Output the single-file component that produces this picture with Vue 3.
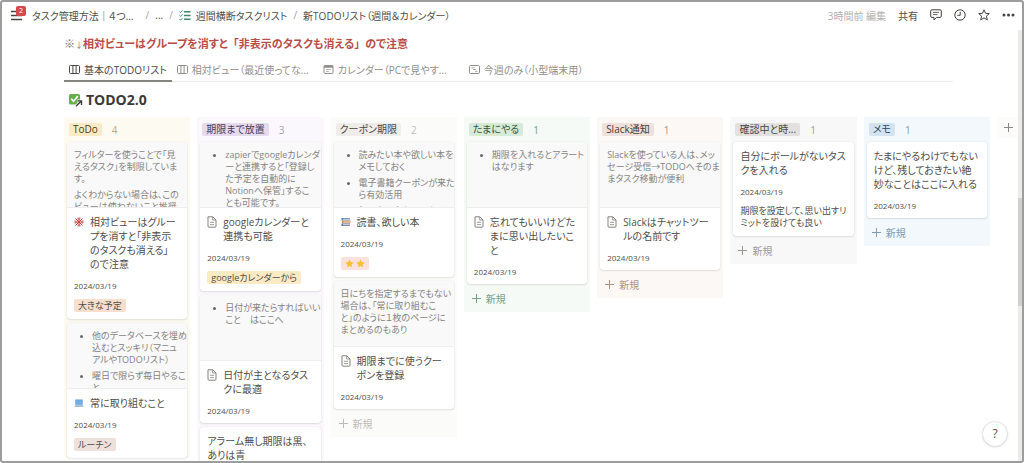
<script setup>
const tabs = [
  { label: '基本のTODOリスト', icon: 'board', active: true },
  { label: '相対ビュー（最近使ってな...', icon: 'board', wide: true },
  { label: 'カレンダー（PCで見やす...', icon: 'calendar', wide: true },
  { label: '今週のみ（小型端末用）', icon: 'timeline' },
]

const columns = [
  {
    name: 'ToDo', count: 4, tone: 'yellow',
    cards: [
      {
        cover: [
          { lines: ['フィルターを使うことで「見', 'えるタスク」を制限していま', 'す。'] },
          { lines: ['よくわからない場合は、この', 'ビューは使わないこと推奨'] },
        ],
        icon: 'ornament',
        title: ['相対ビューはグルー', 'プを消すと「非表示', 'のタスクも消える」', 'ので注意'],
        date: '2024/03/19',
        tag: { text: '大きな予定', tone: 'orange' },
      },
      {
        cover: [
          { bullet: true, lines: ['他のデータベースを埋め', '込むとスッキリ（マニュ', 'アルやTODOリスト）'] },
          { bullet: true, lines: ['曜日で限らず毎日やるこ', 'と'] },
        ],
        icon: 'laptop',
        title: ['常に取り組むこと'],
        date: '2024/03/19',
        tag: { text: 'ルーチン', tone: 'brown' },
      },
    ],
  },
  {
    name: '期限まで放置', count: 3, tone: 'purple',
    cards: [
      {
        cover: [{ bullet: true, lines: ['zapierでgoogleカレンダ', 'ーと連携すると「登録し', 'た予定を自動的に', 'Notionへ保管」するこ', 'とも可能です。'] }],
        icon: 'page',
        title: ['googleカレンダーと', '連携も可能'],
        date: '2024/03/19',
        tag: { text: 'googleカレンダーから', tone: 'gold' },
      },
      {
        cover: [{ bullet: true, lines: ['日付が来たらすればいい', 'こと　はここへ'] }],
        icon: 'page',
        title: ['日付が主となるタス', 'クに最適'],
        date: '2024/03/19',
      },
      { title: ['アラーム無し期限は黒、', 'ありは青'] },
    ],
  },
  {
    name: 'クーポン期限', count: 2, tone: 'sand', create: true,
    cards: [
      {
        cover: [
          { bullet: true, lines: ['読みたい本や欲しい本を', 'メモしておく'] },
          { bullet: true, lines: ['電子書籍クーポンが来た', 'ら有効活用'] },
          { bullet: true, lines: ['気になる本もメモする'] },
        ],
        icon: 'books',
        title: ['読書、欲しい本'],
        date: '2024/03/19',
        tag: { stars: 2, tone: 'red' },
      },
      {
        cover: [{ lines: ['日にちを指定するまでもない', '場合は、「常に取り組むこ', 'と」のように１枚のページに', 'まとめるのもあり'] }],
        icon: 'page',
        title: ['期限までに使うクー', 'ポンを登録'],
        date: '2024/03/19',
      },
    ],
  },
  {
    name: 'たまにやる', count: 1, tone: 'green', create: true,
    cards: [
      {
        cover: [{ bullet: true, lines: ['期限を入れるとアラート', 'はなります'] }],
        icon: 'page',
        title: ['忘れてもいいけどた', 'まに思い出したいこ', 'と'],
        date: '2024/03/19',
      },
    ],
  },
  {
    name: 'Slack通知', count: 1, tone: 'clay', create: true,
    cards: [
      {
        cover: [{ lines: ['Slackを使っている人は、メッ', 'セージ受信→TODOへそのま', 'まタスク移動が便利'] }],
        icon: 'page',
        title: ['Slackはチャットツー', 'ルの名前です'],
        date: '2024/03/19',
      },
    ],
  },
  {
    name: '確認中と時...', count: 1, tone: 'gray', create: true,
    cards: [
      {
        title: ['自分にボールがないタス', 'クを入れる'],
        date: '2024/03/19',
        note: ['期限を設定して、思い出すリ', 'ミットを設けても良い'],
      },
    ],
  },
  {
    name: 'メモ', count: 1, tone: 'blue', create: true,
    cards: [
      {
        title: ['たまにやるわけでもない', 'けど、残しておきたい絶', '妙なことはここに入れる'],
        date: '2024/03/19',
      },
    ],
  },
]
</script>

<template>
  <div class="window">
    <header class="topbar">
      <button class="menu" aria-label="メニュー">
        <svg width="13" height="11" viewBox="0 0 13 11"><path d="M0 1.5h11M0 5.5h11M0 9.5h11" stroke="#4a4845" stroke-width="1.3" /></svg>
        <span class="badge">2</span>
      </button>
      <nav class="crumbs">
        <a href="#">タスク管理方法｜４つ...</a>
        <span class="slash first">/</span>
        <a href="#">...</a>
        <span class="slash">/</span>
        <a href="#" class="with-icon">
          <svg width="12" height="11" viewBox="0 0 12 11" fill="none" stroke="#3c8b66"><path d="M.5 1.6l1 1L3.4.6M.5 5.4l1 1 1.900-2M.5 9.200l1 1 1.900-2" /><path d="M5 1.700h6.500M5 5.500h6.500M5 9.300h6.500" stroke-width="1.500" /></svg>
          週間横断タスクリスト
        </a>
        <span class="slash">/</span>
        <a href="#">新TODOリスト（週間＆カレンダー）</a>
      </nav>
      <div class="actions">
        <span class="edited">3時間前 編集</span>
        <button class="share">共有</button>
        <button aria-label="コメント">
          <svg width="12" height="12" viewBox="0 0 12 12" fill="none" stroke="#45423f" stroke-linejoin="round"><path d="M2 .8h8q1.300 0 1.300 1.300v5q0 1.300-1.300 1.300H6.500L4 11V8.400H2Q.7 8.400.7 7.100v-5Q.7.8 2 .8z" /><path d="M3 3.400h6M3 5.600h4.500" stroke-width=".8" /></svg>
        </button>
        <button aria-label="更新履歴">
          <svg width="12" height="12" viewBox="0 0 12 12" fill="none" stroke="#45423f"><circle cx="6" cy="6" r="5.200" /><path d="M6.200 2.800v3.500H3.400" /></svg>
        </button>
        <button aria-label="お気に入り">
          <svg width="12" height="12" viewBox="0 0 12 12" fill="none" stroke="#45423f" stroke-linejoin="round"><path d="M6 .8l1.500 3.500 3.800.3-2.900 2.500.9 3.800L6 8.900l-3.300 2 .9-3.800L.7 4.600l3.800-.3z" /></svg>
        </button>
        <button aria-label="その他">
          <svg width="13" height="12" viewBox="0 0 13 12" fill="#45423f"><circle cx="2" cy="6" r="1.500" /><circle cx="6.500" cy="6" r="1.500" /><circle cx="11" cy="6" r="1.500" /></svg>
        </button>
      </div>
    </header>

    <main class="page">
      <div class="content">
        <p class="notice"><span class="mark">※<small>↓</small></span><span>相対ビューはグループを消すと<span class="full">「</span>非表示のタスクも消える<span class="full">」</span>ので注意</span></p>

        <div class="tabs" role="tablist">
          <button v-for="tab in tabs" :key="tab.label" role="tab" :aria-selected="!!tab.active" class="tab" :class="{ active: tab.active, wide: tab.wide }">
            <svg v-if="tab.icon === 'board'" width="11" height="9" viewBox="0 0 11 9" fill="none" stroke="currentColor"><rect x=".5" y=".5" width="10" height="8" rx="1" /><path d="M3.900.5v8M7.100.5v8" /></svg>
            <svg v-else-if="tab.icon === 'calendar'" width="11" height="9" viewBox="0 0 11 9" fill="none" stroke="currentColor"><rect x="1" y=".5" width="9" height="8" rx="1" /><path d="M1 1.700h9" stroke-width="2" /><path d="M3 4.500h5M3 6.500h3" stroke-width=".6" /></svg>
            <svg v-else width="11" height="9" viewBox="0 0 11 9" fill="none" stroke="currentColor"><rect x=".5" y=".5" width="10" height="8" rx="1" /><path d="M2.500 2.800h3M4 4.500h3M6 6.300h2.500" stroke-width=".8" /></svg>
            <span>{{ tab.label }}</span>
          </button>
        </div>

        <h1 class="db-title">
          <svg width="14" height="14" viewBox="0 0 14 14" fill="none"><rect x="0" y="1" width="11" height="10.500" rx="1.500" fill="#66b04b" /><path d="M2.300 5.800l2.300 2.500L8.800 3" stroke="#fff" stroke-width="1.600" /><path d="M6.700 13.500l5-5M8.300 7.800h4v4" stroke="#fff" stroke-width="2.800" /><path d="M7 13.300l5-5M8.500 7.900h4v4" stroke="#3c3a37" stroke-width="1.400" /></svg>
          TODO2.0
        </h1>
      </div>

      <div class="board-row">
        <div class="board">
          <section v-for="col in columns" :key="col.name" class="column" :class="col.tone">
            <div class="col-head">
              <h2 class="chip">{{ col.name }}</h2>
              <span class="count">{{ col.count }}</span>
            </div>
            <div class="cards">
              <article v-for="(card, i) in col.cards" :key="i" class="card">
                <div v-if="card.cover" class="cover">
                  <p v-for="(para, p) in card.cover" :key="p" :class="{ bullet: para.bullet }">
                    <template v-for="(line, l) in para.lines" :key="l"><br v-if="l" />{{ line }}</template>
                  </p>
                </div>
                <div class="body">
                  <div class="title-row">
                    <span v-if="card.icon" class="icon">
                      <svg v-if="card.icon === 'page'" width="10" height="12" viewBox="0 0 10 12" fill="none" stroke="#83817d"><path d="M1 .8h4.800L9 4v6.200q0 1-1 1H2q-1 0-1-1z" /><path d="M5.700.8V4H9M3 6.300h4M3 8.600h4" stroke-width=".8" /></svg>
                      <svg v-else-if="card.icon === 'ornament'" width="10" height="10" viewBox="0 0 10 10" fill="none" stroke="#c8453f"><path d="M5 .3v9.400M.3 5h9.400M1.500 1.500l7 7M8.500 1.500l-7 7" stroke-width="1" /><path d="M3.200.9L5 2.500 6.800.9M3.200 9.100L5 7.500l1.800 1.600M.9 3.200L2.500 5 .9 6.800M9.100 3.200L7.500 5l1.600 1.800" stroke-width=".8" /></svg>
                      <svg v-else-if="card.icon === 'laptop'" width="10" height="10" viewBox="0 0 10 10"><path d="M1.300 1.500h7.400v5.300H1.300z" fill="#5b9bdc" /><path d="M2 2.200h6v3.900H2z" fill="#71aeea" /><path d="M1.300 6.900h7.400l1 2H.3z" fill="#a7bfd8" /></svg>
                      <svg v-else width="10" height="10" viewBox="0 0 10 10"><path d="M.5 1h8.500v2.500H.5z" fill="#587fb8" /><path d="M2 1.800h7v1H2z" fill="#e9e4da" /><path d="M1 3.700h8.500v2.500H1z" fill="#d98a45" /><path d="M2.500 4.500h7v1h-7z" fill="#f2e6d2" /><path d="M.5 6.400H9v2.600H.5z" fill="#5a6fa8" /><path d="M2 7.200h7v1H2z" fill="#e9e4da" /></svg>
                    </span>
                    <h3><template v-for="(line, l) in card.title" :key="l"><br v-if="l" />{{ line }}</template></h3>
                  </div>
                  <time v-if="card.date" class="date">{{ card.date }}</time>
                  <span v-if="card.tag" class="tag" :class="card.tag.tone">
                    <template v-if="card.tag.stars">
                      <svg v-for="n in card.tag.stars" :key="n" width="9" height="9" viewBox="0 0 12 12"><path d="M6 .5l1.700 3.600 3.900.4-2.900 2.700.8 3.900L6 9.200l-3.500 1.900.8-3.900L.4 4.500l3.900-.4z" fill="#f5c22e" /></svg>
                    </template>
                    <template v-else>{{ card.tag.text }}</template>
                  </span>
                  <p v-if="card.note" class="note"><template v-for="(line, l) in card.note" :key="l"><br v-if="l" />{{ line }}</template></p>
                </div>
              </article>
            </div>
            <button v-if="col.create" class="new">
              <svg width="9" height="9" viewBox="0 0 9 9" stroke="currentColor"><path d="M4.500 0v9M0 4.500h9" /></svg>
              新規
            </button>
          </section>
        </div>
        <button class="add-group" aria-label="グループを追加">
          <svg width="9" height="9" viewBox="0 0 9 9" stroke="currentColor"><path d="M4.500 0v9M0 4.500h9" /></svg>
        </button>
      </div>
    </main>

    <div class="scrollbar"><div class="thumb"></div></div>
    <button class="help" aria-label="ヘルプ">?</button>
  </div>
</template>

<style>
body {
  margin: 0;
  background: #fff;
}
</style>

<style scoped>
.window {
  position: relative;
  box-sizing: border-box;
  height: 100vh;
  overflow: hidden;
  display: flex;
  flex-direction: column;
  border: 2px solid #9d9d9d;
  border-radius: 3px;
  background: #fff;
  color: #504d4a;
  font-family: "Open Sans", "Noto Sans CJK JP", sans-serif;
  font-size: 10px;
  font-feature-settings: "palt";
}
h1, h2, h3, p {
  margin: 0;
  font-weight: 400;
}
svg {
  display: block;
  flex: none;
}
button {
  margin: 0;
  padding: 0;
  border: 0;
  background: none;
  color: inherit;
  font: inherit;
  font-feature-settings: inherit;
}
a {
  color: inherit;
  text-decoration: none;
}

.topbar {
  flex: none;
  display: flex;
  align-items: center;
  height: 26px;
  padding: 0 7px 0 9px;
  white-space: nowrap;
}
.menu {
  position: relative;
  width: 21px;
}
.badge {
  position: absolute;
  left: 5px;
  top: -4px;
  width: 10px;
  height: 10px;
  border-radius: 2px;
  background: #d9474c;
  color: #fff;
  font-size: 7px;
  line-height: 10px;
  text-align: center;
}
.crumbs {
  display: flex;
  align-items: center;
}
.slash {
  margin: 0 6px;
  color: #a5a29e;
}
.slash.first {
  margin-left: 12px;
}
.with-icon {
  display: flex;
  align-items: center;
  gap: 5px;
}
.actions {
  display: flex;
  align-items: center;
  gap: 12px;
  margin-left: auto;
}
.edited {
  color: #b3b1ad;
}

.page {
  flex: 1;
  min-height: 0;
  overflow: hidden;
  padding: 6px 0 0 62px;
}
.content {
  margin-right: 69px;
}
.notice {
  display: flex;
  height: 20px;
  line-height: 20px;
  font-size: 11px;
  font-weight: 700;
  color: #b94c48;
}
.mark {
  font-weight: 400;
  color: #86736f;
}
.mark small {
  font-size: 8px;
}
.full {
  font-feature-settings: normal;
}
.tabs {
  display: flex;
  height: 27px;
  border-bottom: 1px solid #ececea;
}
.tab {
  display: flex;
  align-items: center;
  gap: 4px;
  box-sizing: border-box;
  height: 28px;
  padding: 3px 5px 0;
  color: #918f8b;
  white-space: nowrap;
}
.tab.wide {
  width: 146px;
}
.tab.active {
  padding-top: 4px;
  border-bottom: 2px solid #85837f;
  color: #4a4845;
}
.db-title {
  display: flex;
  align-items: center;
  gap: 3px;
  height: 35px;
  padding-left: 5px;
  font-size: 14px;
  font-weight: 700;
  color: #3c3a37;
}

.board-row {
  display: flex;
  align-items: flex-start;
  margin-right: 4px;
}
.board {
  flex: 1;
  display: grid;
  grid-template-columns: repeat(7, minmax(0, 1fr));
  gap: 7px;
  align-items: start;
}
.column {
  background: var(--bg);
}
.col-head {
  display: flex;
  align-items: center;
  height: 25px;
  padding-left: 5px;
}
.chip {
  padding: 0 4px;
  border-radius: 2px;
  background: var(--chip);
  color: var(--ink);
  font-size: 10px;
  line-height: 13px;
  white-space: nowrap;
}
.count {
  margin-left: 10px;
  color: var(--accent);
}
.cards {
  display: flex;
  flex-direction: column;
  gap: 4px;
  padding: 0 3px;
}
.card {
  overflow: hidden;
  border-radius: 3px;
  background: #fff;
  box-shadow: 0 0 1px rgba(15, 15, 15, .16), 0 1px 2px rgba(15, 15, 15, .1);
  white-space: nowrap;
}
.cover {
  box-sizing: border-box;
  height: 66px;
  overflow: hidden;
  padding: 7px 7px 0;
  border-bottom: 1px solid #eeeeed;
  background: #f9f9f9;
  color: #85837f;
  font-size: 9px;
  line-height: 12px;
}
.cover p + p {
  margin-top: 4px;
}
.bullet {
  position: relative;
  padding-left: 18px;
}
.bullet::before {
  content: "";
  position: absolute;
  left: 6px;
  top: 5px;
  width: 3px;
  height: 3px;
  border-radius: 50%;
  background: #6b6966;
}
.body {
  display: flex;
  flex-direction: column;
  align-items: flex-start;
  padding: 7px 7px 5px;
}
.body:has(.tag),
.body:has(.note) {
  padding-bottom: 7px;
}
.title-row {
  display: flex;
}
.icon {
  display: flex;
  align-items: center;
  width: 16px;
  height: 14px;
}
h3 {
  font-size: 10px;
  line-height: 14px;
}
.date {
  margin-top: 8px;
  font-size: 8px;
  line-height: 14px;
}
.tag {
  display: flex;
  align-items: center;
  gap: 2px;
  height: 13px;
  margin-top: 6px;
  padding: 0 4px;
  border-radius: 2px;
  font-size: 9px;
  line-height: 13px;
}
.tag.orange { background: #f6dfcd; }
.tag.brown { background: #eee0da; }
.tag.gold { background: #fbeac4; }
.tag.red { background: #fbe1de; }
.note {
  margin-top: 6px;
  font-size: 9px;
  line-height: 12px;
}
.new {
  display: flex;
  align-items: center;
  gap: 5px;
  width: 100%;
  height: 28px;
  padding-left: 8px;
  color: var(--accent);
}
.add-group {
  display: flex;
  align-items: center;
  justify-content: center;
  width: 20px;
  height: 21px;
  margin-left: 8px;
  background: #fcfcfb;
  color: #8c8a87;
}

.yellow { --bg: #fdfaf2; --chip: #fbeac4; --ink: #4b3b1f; --accent: #c0a878; }
.purple { --bg: #faf8fc; --chip: #e5daee; --ink: #493a58; --accent: #a99fb3; }
.sand { --bg: #fbfbf9; --chip: #efecea; --ink: #4a4845; --accent: #bdbbb8; }
.green { --bg: #f5faf6; --chip: #d6ead6; --ink: #34543f; --accent: #76a082; }
.clay { --bg: #fbf8f6; --chip: #eee0da; --ink: #4b3832; --accent: #b08f80; }
.gray { --bg: #f9f8f8; --chip: #e3e1e0; --ink: #4a4845; --accent: #9b9996; }
.blue { --bg: #f3f8fc; --chip: #d3e4f0; --ink: #2b4a62; --accent: #7c9db3; }

.scrollbar {
  position: absolute;
  top: 28px;
  right: 0;
  bottom: 0;
  width: 4px;
  background: #ecebea;
}
.thumb {
  height: 25%;
  margin-top: 168px;
  background: #d1d0ce;
}
.help {
  position: absolute;
  right: 15px;
  bottom: 15px;
  width: 24px;
  height: 24px;
  border-radius: 50%;
  background: #fff;
  box-shadow: 0 0 2px rgba(15, 15, 15, .25), 0 1px 3px rgba(15, 15, 15, .12);
  font-size: 12px;
  line-height: 24px;
  text-align: center;
}
</style>
